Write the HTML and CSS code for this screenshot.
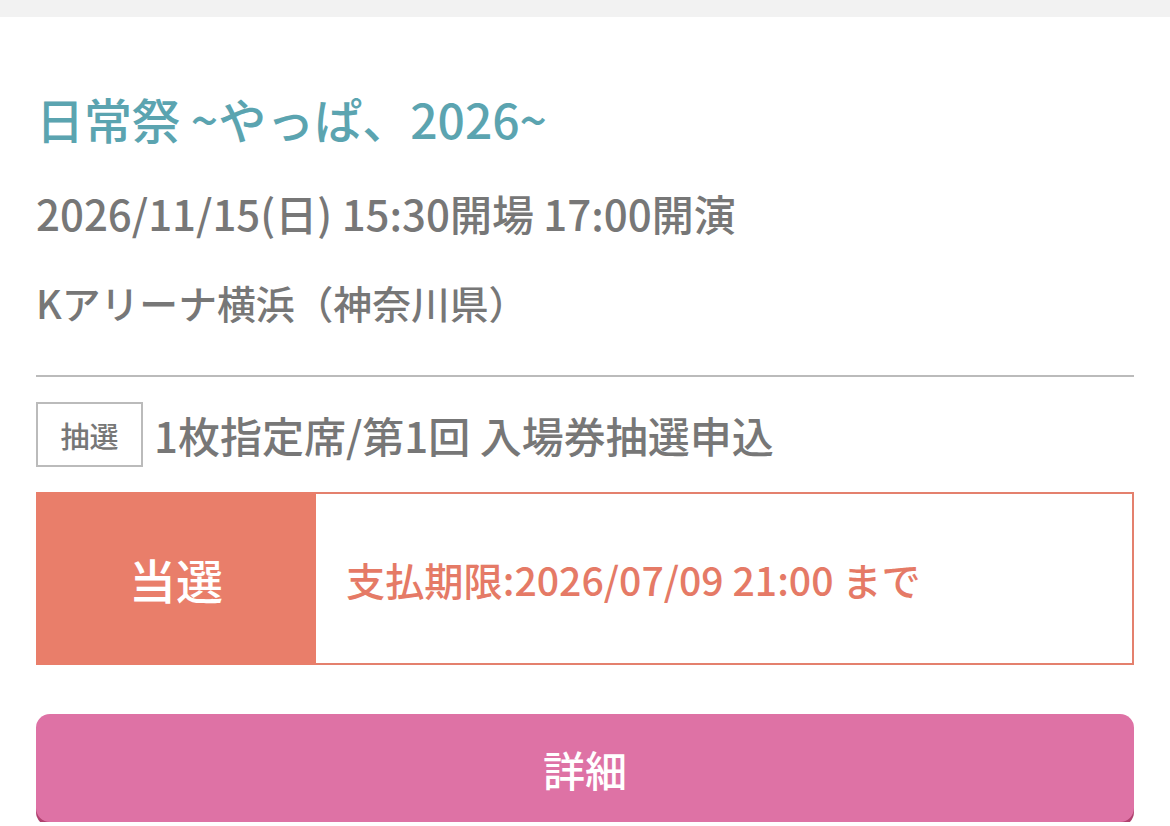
FILE: index.html
```html
<!DOCTYPE html>
<html lang="ja">
<head>
    <meta charset="UTF-8">
    <meta name="viewport" content="width=device-width, initial-scale=1.0">
    <title>申込履歴</title>
    <link rel="stylesheet" href="styles.css">
</head>
<body>
    <div class="top-bar"></div>
    <div class="event">
        <h2 class="event-title">日常祭 ~やっぱ、2026~</h2>
        <p class="event-date">2026/11/15(日) 15:30開場 17:00開演</p>
        <p class="event-venue">Kアリーナ横浜（神奈川県）</p>

        <div class="entry">
            <div class="entry-head">
                <span class="badge">抽選</span>
                <span class="entry-name">1枚指定席/第1回 入場券抽選申込</span>
            </div>
            <div class="result">
                <div class="result-label">当選</div>
                <div class="result-text">支払期限:2026/07/09 21:00 まで</div>
            </div>
            <button class="detail-btn">詳細</button>
        </div>
    </div>
</body>
</html>
```

FILE: styles.css
```css
body {
    margin: 0;
    background: #fff;
    font-family: "Noto Sans CJK JP", "Noto Sans", sans-serif;
    font-weight: 500;
    color: #777;
}

.top-bar {
    height: 17px;
    background: #f2f2f2;
}

.event {
    padding: 71px 36px 0;
}

.event-title {
    margin: 0;
    font-size: 48px;
    line-height: 60px;
    font-weight: 500;
    color: #5ba4b0;
}

.event-date,
.event-venue {
    margin: 0;
    line-height: 56px;
}

.event-date {
    margin-top: 37px;
    font-size: 42px;
}

.event-venue {
    margin-top: 33px;
    font-size: 38.8px;
}

.entry {
    margin-top: 45px;
    border-top: 2px solid #bbb;
    padding-top: 25px;
}

.entry-head {
    display: flex;
    align-items: center;
    gap: 11px;
}

.badge {
    box-sizing: border-box;
    width: 107px;
    height: 65px;
    border: 2px solid #bbb;
    display: flex;
    justify-content: center;
    align-items: center;
    font-size: 29px;
}

.entry-name {
    font-size: 42px;
}

.result {
    display: flex;
    margin-top: 25px;
    height: 173px;
    box-sizing: border-box;
    border: 2px solid #e4806d;
}

.result-label {
    width: 280px;
    margin: -2px 0 -2px -2px;
    background: #e97e6a;
    color: #fff;
    font-size: 47px;
    display: flex;
    justify-content: center;
    align-items: center;
}

.result-text {
    display: flex;
    align-items: center;
    padding-left: 30px;
    font-size: 39.2px;
    color: #e57a66;
}

.detail-btn {
    display: block;
    width: 100%;
    height: 108px;
    margin-top: 49px;
    border: none;
    border-radius: 14px;
    background: #de72a5;
    box-shadow: 0 4px 0 #b0416f;
    color: #fff;
    font-family: inherit;
    font-weight: 500;
    font-size: 42px;
    cursor: pointer;
}
```
